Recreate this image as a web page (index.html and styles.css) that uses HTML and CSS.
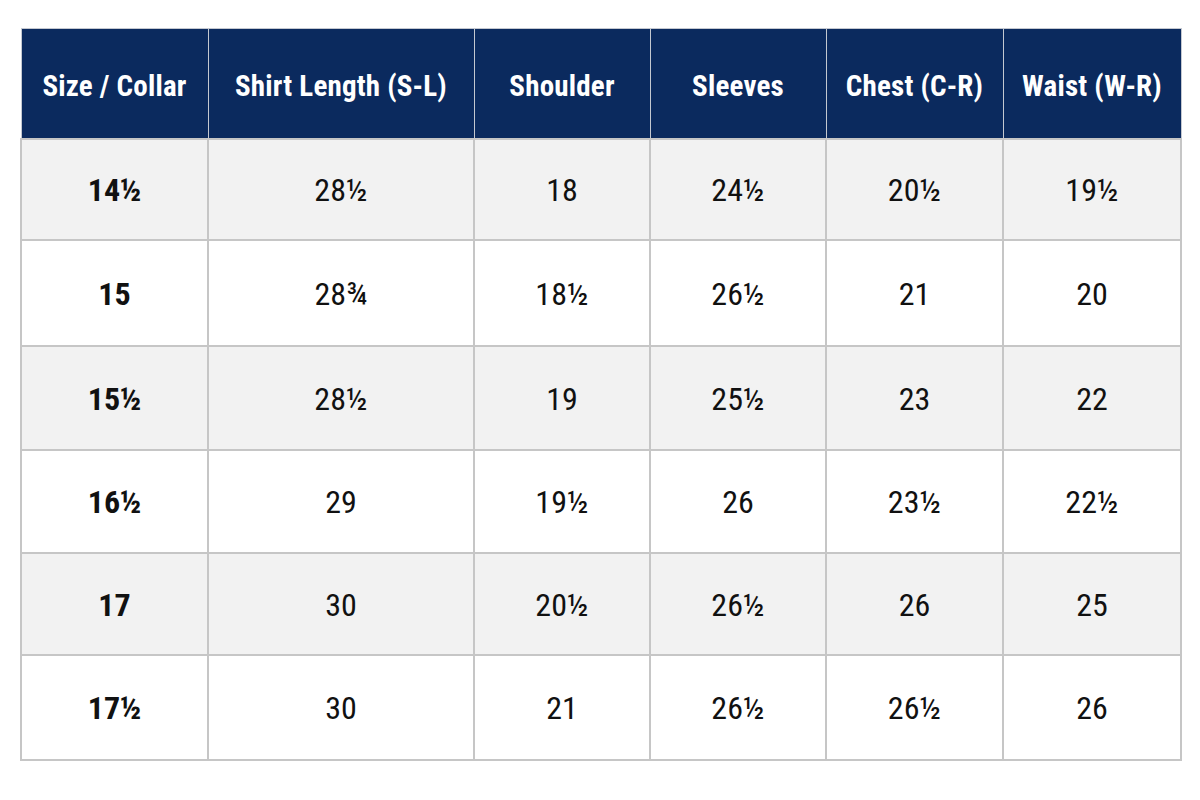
FILE: index.html
```html
<!DOCTYPE html>
<html>
<head>
<meta charset="utf-8">
<link rel="stylesheet" href="styles.css">
</head>
<body>
<div class="page">
<table class="size-table">
  <colgroup>
    <col class="c1"><col class="c2"><col class="c3"><col class="c4"><col class="c5"><col class="c6">
  </colgroup>
  <thead>
    <tr class="head">
      <th>Size / Collar</th>
      <th>Shirt Length (S-L)</th>
      <th>Shoulder</th>
      <th>Sleeves</th>
      <th>Chest (C-R)</th>
      <th>Waist (W-R)</th>
    </tr>
  </thead>
  <tbody>
    <tr class="r1"><td class="size">14½</td><td>28½</td><td>18</td><td>24½</td><td>20½</td><td>19½</td></tr>
    <tr class="r2"><td class="size">15</td><td>28¾</td><td>18½</td><td>26½</td><td>21</td><td>20</td></tr>
    <tr class="r3"><td class="size">15½</td><td>28½</td><td>19</td><td>25½</td><td>23</td><td>22</td></tr>
    <tr class="r4"><td class="size">16½</td><td>29</td><td>19½</td><td>26</td><td>23½</td><td>22½</td></tr>
    <tr class="r5"><td class="size">17</td><td>30</td><td>20½</td><td>26½</td><td>26</td><td>25</td></tr>
    <tr class="r6"><td class="size">17½</td><td>30</td><td>21</td><td>26½</td><td>26½</td><td>26</td></tr>
  </tbody>
</table>
</div>
</body>
</html>
```

FILE: styles.css
```css
html, body {
  margin: 0;
  padding: 0;
  background: #ffffff;
}
.page {
  padding: 28px 20px 0 20px;
}
.size-table {
  width: 1160px;
  border-collapse: collapse;
  table-layout: fixed;
  font-family: "Liberation Sans Narrow", "Roboto Condensed", Roboto, sans-serif;
  color: #111111;
}
.c1 { width: 187px; }
.c2 { width: 266px; }
.c3 { width: 176px; }
.c4 { width: 176px; }
.c5 { width: 177px; }
.c6 { width: 178px; }

.size-table tr.head { height: 110px; }
.size-table th {
  background: #0b2a5e;
  color: #ffffff;
  font-weight: bold;
  font-size: 29px;
  letter-spacing: 0.2px;
  padding: 6px 0 0 0;
  text-align: center;
  border: 1px solid #c4c8d0;
  white-space: nowrap;
}
.size-table td {
  text-align: center;
  font-size: 32px;
  border: 2px solid #c6c6c6;
  padding: 2px 0 0 0;
}
.size-table tr.r1 { height: 101px; background: #f2f2f2; }
.size-table tr.r2 { height: 106px; background: #ffffff; }
.size-table tr.r3 { height: 104px; background: #f2f2f2; }
.size-table tr.r4 { height: 103px; background: #ffffff; }
.size-table tr.r5 { height: 102px; background: #f2f2f2; }
.size-table tr.r6 { height: 105px; background: #ffffff; }
.size-table td.size {
  font-weight: bold;
}
```
